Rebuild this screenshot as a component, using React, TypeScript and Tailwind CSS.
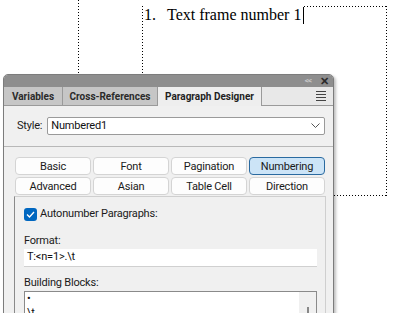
import React from "react";

const ui = { fontFamily: 'Roboto, "Liberation Sans", Arial, sans-serif' };

function Btn({ label, active }: { label: string; active?: boolean }) {
  return (
    <div
      className={
        "flex items-center justify-center h-[18px] rounded-[4px] border text-[11px] tracking-[-0.2px] leading-none text-[#1a1a1a] " +
        (active ? "bg-[#cce4f7] border-[#2a6aa0]" : "bg-[#fdfdfd] border-[#d4d4d4]")
      }
    >
      {label}
    </div>
  );
}

export default function App() {
  return (
    <div className="relative w-[395px] h-[313px] bg-white overflow-hidden" style={ui}>
      {/* document dotted guides */}
      <div className="absolute left-[78px] top-0 w-px h-[74px] bg-[linear-gradient(to_bottom,#000_1px,transparent_1px)] bg-[length:1px_3px]" />
      <div className="absolute left-[142px] top-[6px] w-px h-[68px] bg-[linear-gradient(to_bottom,#000_1px,transparent_1px)] bg-[length:1px_3px]" />
      <div className="absolute left-[142px] top-[6px] w-[245px] h-px bg-[linear-gradient(to_right,#000_1px,transparent_1px)] bg-[length:3px_1px]" />
      <div className="absolute left-[386px] top-[6px] w-px h-[190px] bg-[linear-gradient(to_bottom,#000_1px,transparent_1px)] bg-[length:1px_3px]" />
      <div className="absolute left-[334px] top-[195px] w-[53px] h-px bg-[linear-gradient(to_right,#000_1px,transparent_1px)] bg-[length:3px_1px]" />

      <div
        className="absolute left-[144px] top-[5px] flex items-center text-[16px] leading-[20px] text-black bg-white"
        style={{ fontFamily: '"Liberation Serif", "Times New Roman", serif' }}
      >
        <span className="w-[23px]">1.</span>
        <span>Text frame number 1</span>
        <span className="inline-block w-px h-[17px] bg-black ml-[2px]" />
      </div>

      {/* floating panel */}
      <div className="absolute left-[3px] top-[74px] w-[331px] h-[250px] rounded-t-[5px] border border-[#7c7c7c] bg-[#f0f0f0] shadow-[2px_2px_3px_rgba(0,0,0,0.25)] flex flex-col overflow-hidden">
        {/* title bar */}
        <div className="h-[12px] bg-[#8e8e8e] flex items-center justify-end pr-[4px] gap-[9px] shrink-0">
          <span className="text-[8px] leading-none text-[#c8c8c8] font-bold tracking-[-1px]">&lt;&lt;</span>
          <span className="text-[11px] leading-none text-[#2a2a2a] font-bold">✕</span>
        </div>
        {/* tab row */}
        <div className="h-[19px] flex shrink-0 bg-[#c6c6c6]">
          <div className="w-[59px] flex items-center justify-center text-[10px] font-bold text-[#2b2b2b] border-r border-b border-[#9a9a9a]">Variables</div>
          <div className="w-[95px] flex items-center justify-center text-[10px] font-bold text-[#2b2b2b] border-r border-b border-[#9a9a9a]">Cross-References</div>
          <div className="w-[104px] flex items-center justify-center text-[10px] font-bold text-[#1f1f1f] bg-[#eeeeee] border-r border-[#9a9a9a]">Paragraph Designer</div>
          <div className="flex-1 flex items-center justify-end pr-[7px] bg-[#e8e8e8] border-b border-[#9a9a9a]">
            <div className="flex flex-col gap-[2px]">
              <div className="w-[10px] h-px bg-[#444]" />
              <div className="w-[10px] h-px bg-[#444]" />
              <div className="w-[10px] h-px bg-[#444]" />
              <div className="w-[10px] h-px bg-[#444]" />
            </div>
          </div>
        </div>
        {/* style row */}
        <div className="flex items-center h-[41px] pl-[13px] pr-[8px] gap-[5px] border-b border-[#b8b8b8] shrink-0 text-[11px] tracking-[-0.2px]">
          <span className="text-[#1a1a1a]">Style:</span>
          <div className="flex-1 h-[18px] bg-white border border-[#9a9a9a] rounded-[2px] flex items-center pl-[3px] pr-[4px] text-[#111]">
            <span className="flex-1">Numbered1</span>
            <svg width="9" height="6" viewBox="0 0 9 6"><path d="M0.5 0.5 L4.5 4.5 L8.5 0.5" fill="none" stroke="#555" strokeWidth="1" /></svg>
          </div>
        </div>
        {/* buttons */}
        <div className="pt-[10px] pl-[10px] pr-[7px] flex flex-col">
          <div className="grid grid-cols-4 gap-x-[2px] gap-y-[2px] pl-[1px] pr-[1px]">
            <Btn label="Basic" />
            <Btn label="Font" />
            <Btn label="Pagination" />
            <Btn label="Numbering" active />
            <Btn label="Advanced" />
            <Btn label="Asian" />
            <Btn label="Table Cell" />
            <Btn label="Direction" />
          </div>
          {/* content box */}
          <div className="mt-[1px] border border-[#cfcfcf] border-l-[#8a8a8a] h-[130px] pl-[9px] pr-[8px] pt-[11px] flex flex-col text-[11px] tracking-[-0.2px]">
            <div className="flex items-center gap-[3px] h-[13px]">
              <div className="w-[13px] h-[13px] rounded-[3px] bg-[#0067c0] flex items-center justify-center">
                <svg width="9" height="7" viewBox="0 0 9 7"><path d="M1 3.5 L3.5 6 L8 1" fill="none" stroke="white" strokeWidth="1.3" /></svg>
              </div>
              <span className="text-[#1a1a1a]">Autonumber Paragraphs:</span>
            </div>
            <div className="mt-[13px] leading-[14px] text-[#1a1a1a]">Format:</div>
            <div className="mt-[1px] h-[18px] bg-white border-b border-[#d0d0d0] flex items-center pl-[3px] text-[#111]">T:&lt;n=1&gt;.\t</div>
            <div className="mt-[9px] leading-[14px] text-[#1a1a1a]">Building Blocks:</div>
            <div className="mt-[1px] h-[40px] bg-white border border-[#8a8a8a] flex">
              <div className="flex-1 pl-[2px] leading-[14px] text-[#111]">
                <div>•</div>
                <div>\t</div>
              </div>
              <div className="w-[17px] bg-[#f0f0f0] flex justify-center pt-[15px]">
                <div className="w-[2px] h-[10px] bg-[#888]" />
              </div>
            </div>
          </div>
        </div>
      </div>
    </div>
  );
}
